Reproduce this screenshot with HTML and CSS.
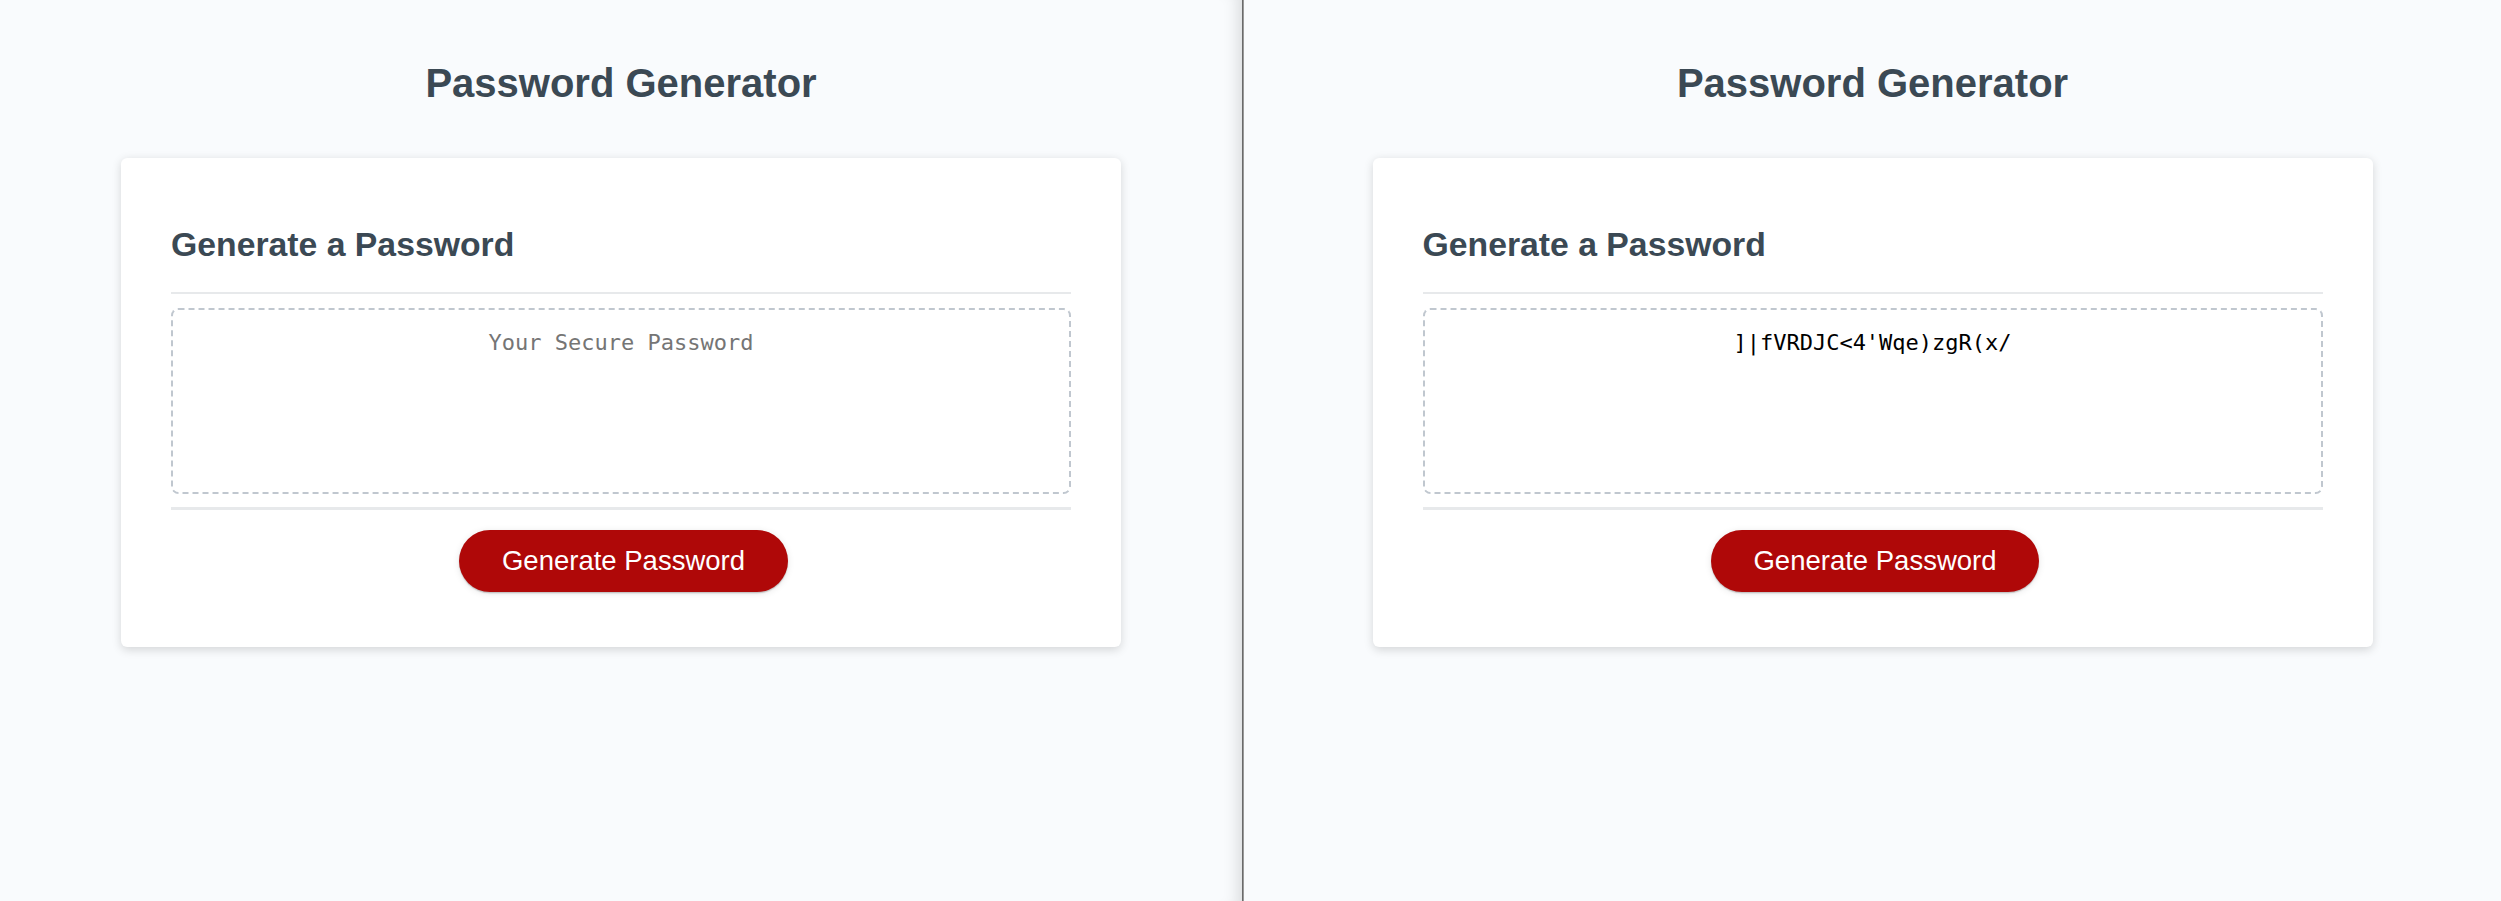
FILE: index.html
```html
<!DOCTYPE html>
<html lang="en">
<head>
<meta charset="UTF-8">
<title>Password Generator</title>
<link rel="stylesheet" href="styles.css">
</head>
<body>
<div class="split">
  <div class="pane pane-left">
    <div class="wrapper">
      <header class="header">
        <h1 class="title">Password Generator</h1>
      </header>
      <div class="card">
        <div class="card-header">
          <h2 class="card-title">Generate a Password</h2>
        </div>
        <div class="card-body">
          <textarea class="password" readonly placeholder="Your Secure Password" aria-label="Generated Password"></textarea>
        </div>
        <div class="card-footer">
          <button class="btn" type="button">Generate Password</button>
        </div>
      </div>
    </div>
  </div>
  <div class="divider"></div>
  <div class="pane pane-right">
    <div class="wrapper">
      <header class="header">
        <h1 class="title">Password Generator</h1>
      </header>
      <div class="card">
        <div class="card-header">
          <h2 class="card-title">Generate a Password</h2>
        </div>
        <div class="card-body">
          <textarea class="password" readonly placeholder="Your Secure Password" aria-label="Generated Password">]|fVRDJC&lt;4'Wqe)zgR(x/</textarea>
        </div>
        <div class="card-footer">
          <button class="btn" type="button">Generate Password</button>
        </div>
      </div>
    </div>
  </div>
</div>
</body>
</html>
```

FILE: styles.css
```css
*, *::before, *::after {
  box-sizing: border-box;
}

html, body {
  margin: 0;
  padding: 0;
  height: 100%;
}

body {
  background-color: #f9fbfd;
  font-family: "Liberation Sans", Arial, sans-serif;
}

.split {
  display: flex;
  height: 901px;
}

.pane {
  height: 100%;
  background-color: #f9fbfd;
}

.pane-left {
  width: 1242px;
  flex: none;
  box-shadow: inset -18px 0 16px -14px rgba(0, 0, 0, 0.13);
}

.divider {
  width: 2px;
  flex: none;
  background: linear-gradient(to right, #6a6a6a 0, #6a6a6a 1px, #9a9a9a 1px, #9a9a9a 2px);
}

.pane-right {
  flex: 1;
}

.wrapper {
  padding: 34.4px 25px 0;
}

.header {
  text-align: center;
  padding: 0 25px 25px;
  color: #3b4954;
}

.title {
  margin: 26.8px 0;
  font-size: 40px;
  font-weight: bold;
  line-height: normal;
}

.card {
  background-color: #ffffff;
  border-radius: 6.25px;
  box-shadow: rgba(0, 0, 0, 0.15) 0 2.5px 10px 0;
  color: #3b4954;
  font-size: 22.5px;
  margin: 0 auto;
  max-width: 1000px;
  padding: 37.5px 50px 35.5px;
}

.card-header::after {
  content: " ";
  display: block;
  width: 100%;
  background: #e7e9eb;
  height: 2.5px;
}

.card-title {
  margin: 29.5px 0 28px;
  font-size: 33.75px;
  font-weight: bold;
  line-height: normal;
}

.card-body {
  min-height: 125px;
}

.password {
  appearance: none;
  -webkit-appearance: none;
  display: block;
  width: 100%;
  height: 186px;
  padding: 19.5px 18.75px 0;
  margin: 13.5px 0 13.5px;
  font-family: "DejaVu Sans Mono", "Liberation Mono", monospace;
  font-size: 22px;
  line-height: 28px;
  text-align: center;
  color: #000000;
  background: #ffffff;
  border: 2px dashed #c0c7cf;
  border-radius: 7.5px;
  resize: none;
  overflow: hidden;
  outline: none;
}

.password::placeholder {
  color: #757575;
}

.card-footer {
  text-align: center;
}

.card-footer::before {
  content: " ";
  display: block;
  width: 100%;
  background: #e7e9eb;
  height: 2.5px;
}

.btn {
  border: none;
  background-color: #af0808;
  border-radius: 31.25px;
  box-shadow: rgba(0, 0, 0, 0.1) 0 1.25px 7.5px 0, rgba(0, 0, 0, 0.2) 0 1.25px 1.25px 0;
  color: #ffffff;
  display: inline-block;
  font-family: "Liberation Sans", Arial, sans-serif;
  font-size: 27.5px;
  line-height: 27.5px;
  margin: 20px 20px 20px 25px;
  padding: 17.25px 42.5px;
  text-align: center;
  cursor: pointer;
}
```
